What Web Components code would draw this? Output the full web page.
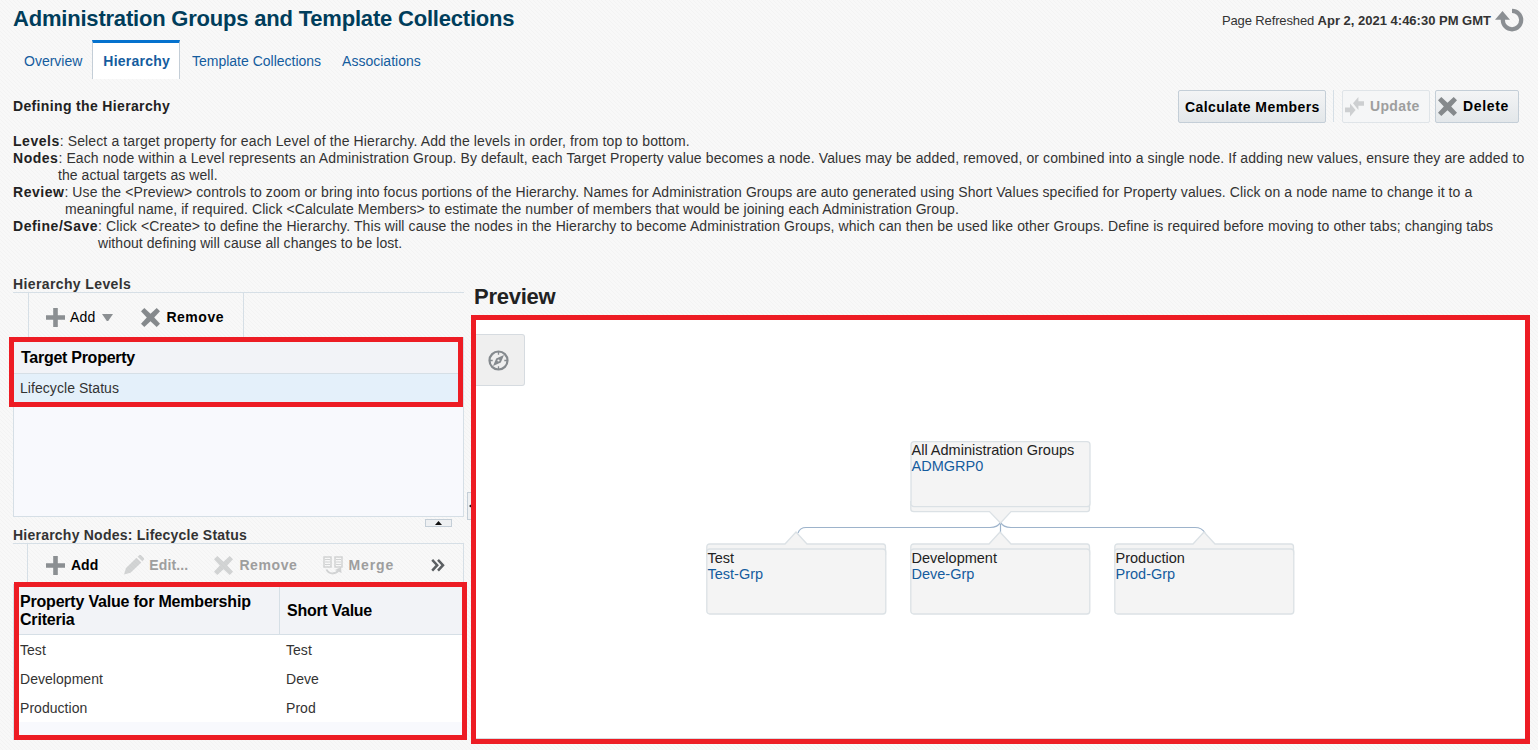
<!DOCTYPE html>
<html lang="en">
<head>
<meta charset="utf-8">
<title>Administration Groups and Template Collections</title>
<style>
html,body{margin:0;height:750px;overflow:hidden}
body{font:14px/17px "Liberation Sans",Arial,sans-serif;color:#333;background:linear-gradient(45deg,#f3f3f3 12.5%,#f8f8f8 12.5% 50%,#f3f3f3 50% 62.5%,#f8f8f8 62.5%) 0 0/4px 4px}
</style>
</head>
<body>
<admin-page></admin-page>
<script>
const define = (name, html) => customElements.define(name, class extends HTMLElement {
  constructor(){ super(); this.attachShadow({mode:'open'}); }
  connectedCallback(){
    this.shadowRoot.innerHTML = typeof html === 'function' ? html(this) : html;
  }
});

const icons = {
  plus:[19,19,'<path d="M7.2 0h4.6v7.2H19v4.6h-7.2V19H7.2v-7.2H0V7.2h7.2z" fill="#8b8f92"/>'],
  cross:[19,19,'<path d="M3.300 0 9.500 5.800 15.700 0 19 3.300 13.200 9.500 19 15.700 15.700 19 9.500 13.200 3.300 19 0 15.700 5.800 9.500 0 3.300z" fill="#85898c"/>'],
  down:[11,7,'<path d="M0 0h11L6.2 7H4.8z" fill="#8b8f92"/>'],
  pencil:[20,20,'<path d="M0 19.5 2 13 12.5 2.8l4.8 4.6L6.5 17.8zM13.7 1.7 15.4 0h1.4L20 3.2v1.2l-1.6 1.8z" fill="#85898c"/>'],
  update:[19,19,'<path d="M8 6.300 13.400 0v4.200H19v4.600h-5.600v4.100zM0 10.400h5V6.500l5.600 6.500L5 19.500v-4.200H0z" fill="#85898c"/>'],
  merge:[20,19,'<path d="M1 1h7v10H1zM12 1h7v10h-7z" fill="none" stroke="#85898c" stroke-width="1.5"/><path d="M2 3.500h5M2 6h5M2 8.500h5M13 3.500h5M13 6h5M13 8.500h5" stroke="#85898c" stroke-width="1.200"/><path d="M3.5 13.5c2 5 9 5 12 1" fill="none" stroke="#85898c" stroke-width="2"/><path d="m12 14 6-3 .5 6z" fill="#85898c"/>'],
  more:[14,13,'<path d="m1.200.9 5 5.3-5 5.400M7 .9l5 5.300-5 5.400" fill="none" stroke="#5b5f62" stroke-width="2.500"/>'],
  refresh:[28,25,'<path d="M16 2.900A9.200 9.200 0 1 1 6.800 12.100V10" fill="none" stroke="#8b8f93" stroke-width="4.200"/><path d="M-1 11.800 6.500 3 14 11.800z" fill="#8b8f93"/>'],
  compass:[21,21,'<circle cx="10.5" cy="10.5" r="9" fill="none" stroke="#858a8e" stroke-width="2.200"/><path d="M10.5 2v2.7M10.5 16.3V19M2 10.5h2.7M16.3 10.5H19" stroke="#858a8e" stroke-width="1.3"/><path d="M16 5 12.800 12.600 5 16 8.200 8.400z" fill="#858a8e"/><circle cx="10.5" cy="10.5" r="1.1" fill="#efefef"/>']
};
define('glyph-icon', el => {
  const [w,h,body] = icons[el.getAttribute('name')];
  return `<style>:host{display:block;flex:none;width:${w}px;height:${h}px}svg{display:block;overflow:visible}</style><svg width="${w}" height="${h}" viewBox="0 0 ${w} ${h}">${body}</svg>`;
});

define('tab-item', `<style>
:host{display:flex;align-items:center;box-sizing:border-box;height:39px;padding:4px 10px 0;color:#145c9e;white-space:nowrap}
:host([selected]){background:#fff;border:solid #c4ced7;border-width:0 1px;padding:0 9px 0 10px;border-top:3px solid #0572ce;font-weight:bold;letter-spacing:.22px}
</style><slot></slot>`);

define('push-button', `<style>
:host{display:flex;align-items:center;box-sizing:border-box;height:33px;border:1px solid #c4ced7;border-radius:2px;background:linear-gradient(#f3f4f5,#e3e7ea);color:#000;font-weight:bold;white-space:nowrap;letter-spacing:.42px}
:host([disabled]){border-color:#dfe4e8;background:#f5f6f7;color:#9e9e9e}
::slotted(glyph-icon){margin-right:6px}
:host([disabled]) ::slotted(glyph-icon){opacity:.35}
</style><slot></slot>`);

define('tool-item', `<style>
:host{display:flex;align-items:center;color:#000;white-space:nowrap;gap:5px;letter-spacing:.15px}
:host([bold]){font-weight:bold}
:host([disabled]){color:#9e9e9e}
:host([disabled]) ::slotted(glyph-icon){opacity:.32}
</style><slot></slot>`);

define('red-frame', `<style>:host{position:absolute;box-sizing:border-box;border:5px solid #ed1c24;pointer-events:none;z-index:3}</style>`);

define('help-entry', `<style>
:host{display:block;white-space:nowrap;letter-spacing:var(--track,.1px)}
div{padding-left:var(--indent);letter-spacing:.06px}
b{color:#222;letter-spacing:.52px}
</style><b><slot name="term"></slot></b><slot name="first"></slot><div><slot name="rest"></slot></div>`);

define('levels-panel', `<style>
:host{display:block;position:relative;height:241px;color:#333}
h3{margin:0;font:bold 14px/17px "Liberation Sans",sans-serif;height:16px;letter-spacing:.38px;color:#333}
.bar{display:flex;border-top:1px solid #d6dfe6;height:45px;box-sizing:border-box}
.tools{display:flex;align-items:center;margin-left:15px;width:216px;box-sizing:border-box;border:solid #d6dfe6;border-width:0 1px;padding:5px 0 0 17px}
.table{box-sizing:border-box;height:180px;border:1px solid #d6dfe6;background:#f8f9fd;display:flex;flex-direction:column}
.head{height:36px;box-sizing:border-box;border-bottom:1px solid #d6dfe6;background:#f2f3f7;color:#000;font:bold 16px/18px "Liberation Sans",sans-serif;letter-spacing:-.27px;padding:11px 7px 0;}
.row{height:29px;line-height:29px;background:#e4f0fa;padding-left:6px;letter-spacing:.06px}
red-frame{left:-4px;top:61px;width:454px;height:70px}
</style>
<h3>Hierarchy Levels</h3>
<div class="bar"><div class="tools">
<tool-item><glyph-icon name="plus"></glyph-icon><span>Add</span><glyph-icon name="down" style="margin-left:2px"></glyph-icon></tool-item>
<tool-item bold style="margin-left:28px"><glyph-icon name="cross"></glyph-icon><span style="margin-left:1px;letter-spacing:.55px">Remove</span></tool-item>
</div></div>
<div class="table"><div class="head">Target Property</div><div class="row">Lifecycle Status</div></div>
<red-frame></red-frame>`);

define('nodes-panel', `<style>
:host{display:block;position:relative;height:213px}
h3{margin:0;font:bold 14px/17px "Liberation Sans",sans-serif;height:16px;letter-spacing:.23px;color:#333}
.bar{display:flex;border-top:1px solid #d6dfe6;height:41px;box-sizing:border-box}
.tools{display:flex;align-items:center;margin-left:14px;flex:1;box-sizing:border-box;border:solid #d6dfe6;border-width:0 1px;padding:2px 0 0 18px}
.grid{display:grid;grid-template-columns:265px 1fr;grid-template-rows:51px repeat(3,29px);margin-right:1px;height:156px;background:#f8f9fd;border-left:1px solid #d6dfe6;box-sizing:border-box}
.grid>*{padding-left:6px;background:#fff;line-height:30px;box-sizing:border-box;letter-spacing:.04px}
.grid>:nth-child(even){padding-left:7px}
.grid>.h{background:#f2f3f7;color:#000;border-bottom:1px solid #d6dfe6;font:bold 16px/18px "Liberation Sans",sans-serif;letter-spacing:-.2px;display:flex;align-items:center;padding-top:4px}
.h+.h{border-left:1px solid #d6dfe6;letter-spacing:-.28px!important}
red-frame{left:1px;top:55px;width:453px;height:158px}
</style>
<h3>Hierarchy Nodes: Lifecycle Status</h3>
<div class="bar"><div class="tools">
<tool-item bold><glyph-icon name="plus"></glyph-icon><span style="margin-left:1px;letter-spacing:0">Add</span></tool-item>
<tool-item bold disabled style="margin-left:26px"><glyph-icon name="pencil"></glyph-icon><span>Edit...</span></tool-item>
<tool-item bold disabled style="margin-left:26px"><glyph-icon name="cross"></glyph-icon><span style="margin-left:1px;letter-spacing:.6px">Remove</span></tool-item>
<tool-item bold disabled style="margin-left:26px"><glyph-icon name="merge"></glyph-icon><span style="letter-spacing:.9px">Merge</span></tool-item>
<tool-item style="margin-left:37px"><glyph-icon name="more"></glyph-icon></tool-item>
</div></div>
<div class="grid"><div class="h">Property Value for Membership Criteria</div><div class="h">Short Value</div>
<div>Test</div><div>Test</div><div>Development</div><div>Deve</div><div>Production</div><div>Prod</div></div>
<red-frame></red-frame>`);

define('group-node', el => `<style>
:host{position:absolute;width:181px;height:73px;font-size:14.5px;line-height:16px;color:#222}
svg{position:absolute;left:0;top:0;overflow:visible}
.t{position:absolute;left:1.5px;top:${el.hasAttribute('root')?1:7}px;white-space:nowrap}
a{display:block;color:#145c9e}
</style>
<svg width="181" height="73" fill="#f4f4f4" stroke="#dbe1e5" stroke-width="1.3">${el.hasAttribute('root')
?'<path d="M.8 60v8q0 2.600 3 2.600H79.500L90.500 82 101 70.600h76q2.500 0 2.500-2.600v-8"/><rect x="1" y=".7" width="179" height="65" rx="3"/>'
:'<path d="M.8 14V4Q.8 1 3.800 1H79L90-11 101 1h76q2.500 0 2.500 3v8"/><rect x=".8" y="6" width="179" height="65" rx="3"/>'}</svg>
<div class="t"><slot></slot><a><slot name="link"></slot></a></div>`);

define('preview-canvas', `<style>
:host{display:block;position:relative;width:1059px;height:429px;box-sizing:border-box;background:#fff;border:5px solid #ed1c24;z-index:2}
:host::after{content:"";position:absolute;left:0;right:0;bottom:0;height:1px;background:#d6dde2}
.nav{position:absolute;left:0;top:14px;width:49px;height:52px;box-sizing:border-box;border:1px solid #d6dbe0;border-left:0;border-radius:0 3px 3px 0;background:#efefef;display:flex;align-items:center;justify-content:center;padding:1px 3px 0 0}
svg{position:absolute;left:0;top:0}
</style>
<div class="nav"><glyph-icon name="compass"></glyph-icon></div>
<svg width="1048" height="419" fill="none" stroke="#9db3cb" stroke-width="1.2"><path d="M322 213Q324 207.500 330 207.500H514Q522 207.500 524.500 202Q527 207.500 535 207.500H719Q726 207.500 729 213M524.500 202V214"/></svg>
<group-node root style="left:434px;top:121px">All Administration Groups<span slot="link">ADMGRP0</span></group-node>
<group-node style="left:230px;top:223px">Test<span slot="link">Test-Grp</span></group-node>
<group-node style="left:434px;top:223px">Development<span slot="link">Deve-Grp</span></group-node>
<group-node style="left:638px;top:223px">Production<span slot="link">Prod-Grp</span></group-node>`);

define('admin-page', `<style>
:host{display:flex;flex-direction:column;width:1538px;height:750px;box-sizing:border-box}
header{display:flex;justify-content:space-between;height:40px;padding:0 14px 0 13px}
h1{margin:6px 0 0;font:bold 22px/26px "Liberation Sans",sans-serif;color:#003d5b;white-space:nowrap;letter-spacing:-.2px}
.fresh{display:flex;align-items:flex-start;gap:5px;font-size:13px;line-height:41px;white-space:nowrap;letter-spacing:-.13px}
.fresh b{letter-spacing:0}
.fresh glyph-icon{margin-top:8px}
nav{display:flex;height:39px;padding-left:14px;}
.actions{display:flex;justify-content:space-between;padding:11px 19px 0 13px;height:54px;box-sizing:border-box}
h2{margin:8px 0 0;font:bold 14px/17px "Liberation Sans",sans-serif;color:#222;letter-spacing:.35px}
.btns{display:flex}
.sep{width:1px;height:32px;background:#d6dfe6;margin:0 8px 0 7px}
.help{height:143px;padding-left:13px}
.split{display:grid;grid-template-columns:451px 7px 1059px;padding-left:13px}
.left{display:flex;flex-direction:column}
.hbar{height:10px;display:flex;justify-content:flex-end;padding:2px 12px 0 0;box-sizing:border-box}
.grip{width:27px;height:8px;box-sizing:border-box;border:1px solid #c4ced7;background:#eef0f2;display:flex;justify-content:center;align-items:center}
.vbar{padding:216px 0 0 3px}
.vgrip{width:7px;height:28px;box-sizing:border-box;border:1px solid #c4ced7;background:#eef0f2;display:flex;align-items:center}
h4{margin:8px 0 6px 3px;font:bold 22px/25px "Liberation Sans",sans-serif;color:#222;letter-spacing:-.25px}
</style>
<header><h1>Administration Groups and Template Collections</h1><div class="fresh"><span>Page Refreshed <b>Apr 2, 2021 4:46:30 PM GMT</b></span><glyph-icon name="refresh"></glyph-icon></div></header>
<nav><tab-item>Overview</tab-item><tab-item selected>Hierarchy</tab-item><tab-item style="padding-left:12px">Template Collections</tab-item><tab-item style="padding-left:11px">Associations</tab-item></nav>
<div class="actions"><h2>Defining the Hierarchy</h2><div class="btns">
<push-button style="width:148px;padding:2px 0 0 6px">Calculate Members</push-button><div class="sep"></div>
<push-button disabled style="width:88px;padding-left:2px;margin-right:5px;letter-spacing:.35px"><glyph-icon name="update"></glyph-icon>Update</push-button>
<push-button style="width:84px;padding-left:2px;letter-spacing:.65px"><glyph-icon name="cross"></glyph-icon>Delete</push-button></div></div>
<div class="help">
<help-entry style="--indent:0px;--track:.12px;height:17px"><span slot="term">Levels</span><span slot="first">: Select a target property for each Level of the Hierarchy. Add the levels in order, from top to bottom.</span></help-entry>
<help-entry style="--indent:45px;--track:.108px"><span slot="term">Nodes</span><span slot="first">: Each node within a Level represents an Administration Group. By default, each Target Property value becomes a node. Values may be added, removed, or combined into a single node. If adding new values, ensure they are added to</span><span slot="rest">the actual targets as well.</span></help-entry>
<help-entry style="--indent:52px;--track:.094px"><span slot="term">Review</span><span slot="first">: Use the &lt;Preview&gt; controls to zoom or bring into focus portions of the Hierarchy. Names for Administration Groups are auto generated using Short Values specified for Property values. Click on a node name to change it to a</span><span slot="rest">meaningful name, if required. Click &lt;Calculate Members&gt; to estimate the number of members that would be joining each Administration Group.</span></help-entry>
<help-entry style="--indent:85px;--track:.1px"><span slot="term">Define/Save</span><span slot="first">: Click &lt;Create&gt; to define the Hierarchy. This will cause the nodes in the Hierarchy to become Administration Groups, which can then be used like other Groups. Define is required before moving to other tabs; changing tabs</span><span slot="rest">without defining will cause all changes to be lost.</span></help-entry>
</div>
<div class="split"><div class="left"><levels-panel></levels-panel>
<div class="hbar"><div class="grip"><svg width="7" height="4"><path d="M3.500 0 7 4H0z" fill="#111"/></svg></div></div>
<nodes-panel></nodes-panel></div>
<div class="vbar"><div class="vgrip"><svg width="5" height="6"><path d="M1 3 5 0v6z" fill="#111"/></svg></div></div>
<div><h4>Preview</h4><preview-canvas></preview-canvas></div></div>`);
</script>
</body>
</html>
